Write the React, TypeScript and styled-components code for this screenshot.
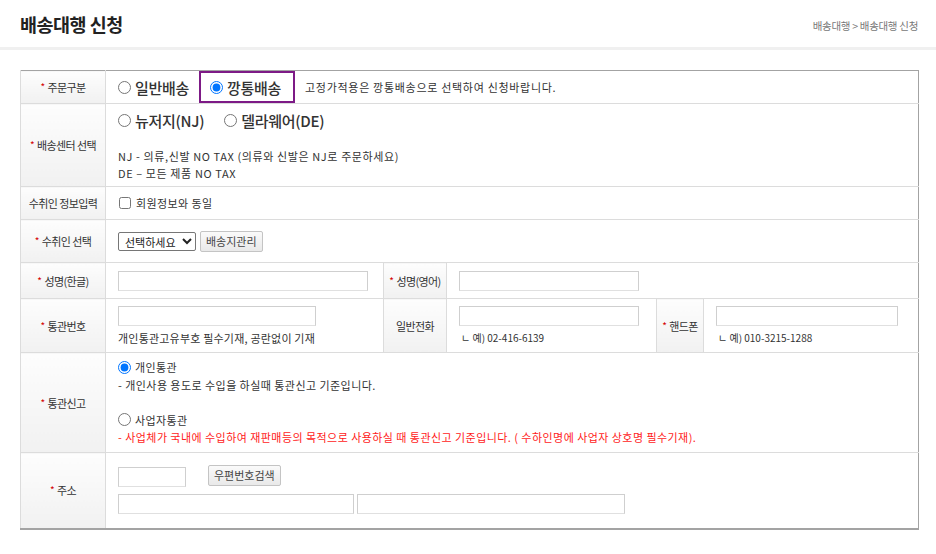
import styled, { createGlobalStyle } from "styled-components";

const GlobalStyle = createGlobalStyle`
  html, body {
    margin: 0;
    padding: 0;
    background: #fff;
    font-family: "Noto Sans CJK KR", "Noto Sans", sans-serif;
    color: #333;
  }
`;

const Page = styled.div({
  width: 936,
  height: 554,
  overflow: "hidden",
  background: "#fff",
});

const Header = styled.div({
  height: 50,
  display: "flex",
  alignItems: "center",
  justifyContent: "space-between",
  padding: "0 18px 0 20px",
  borderBottom: "3px solid #f0f0f0",
  boxSizing: "border-box",
  marginBottom: 20,
});

const Title = styled.h1({
  margin: 0,
  fontSize: 18.5,
  fontWeight: 700,
  color: "#222",
  letterSpacing: -0.5,
});

const Breadcrumb = styled.div({
  fontSize: 10.5,
  color: "#777",
  letterSpacing: -0.3,
  marginTop: 4,
});

const FormTable = styled.table({
  marginLeft: 20,
  width: 898,
  borderCollapse: "collapse",
  tableLayout: "fixed",
  border: "1px solid #a3a3a3",
  borderBottomWidth: 2,
  fontSize: 11,
});

const Row = styled.tr<{ $h: number }>`
  height: ${(p) => p.$h}px;
`;

const Label = styled.th({
  background: "linear-gradient(#fdfdfd, #f1f1f1)",
  borderRight: "1px solid #dcdcdc",
  borderBottom: "1px solid #dcdcdc",
  borderLeft: "1px solid #dcdcdc",
  fontWeight: 400,
  fontSize: 11,
  letterSpacing: -0.6,
  color: "#333",
  textAlign: "center",
  padding: 0,
  whiteSpace: "nowrap",
});

const Star = styled.span({
  color: "#d40000",
  fontSize: 10,
  marginRight: 3,
  verticalAlign: 1,
});

const Cell = styled.td<{ $top?: boolean }>`
  border-bottom: 1px solid #dcdcdc;
  padding: ${(p) => (p.$top ? "6px 0 0 12px" : "0 0 0 12px")};
  vertical-align: ${(p) => (p.$top ? "top" : "middle")};
  color: #333;
`;

const Inline = styled.div({
  display: "flex",
  alignItems: "center",
  gap: 4,
});

const BigOption = styled.label({
  display: "inline-flex",
  alignItems: "center",
  fontSize: 15,
  fontWeight: 500,
  color: "#333",
  letterSpacing: -0.3,
  marginRight: 6,
});

const Highlight = styled.span({
  display: "inline-flex",
  alignItems: "center",
  height: 32,
  boxSizing: "border-box",
  border: "2px solid #7d1a86",
  padding: "0 12px 0 9px",
  margin: "-1px 6px -1px 0",
});

const Radio = styled.input.attrs({ type: "radio" })({
  width: 13,
  height: 13,
  margin: "0 4px 0 0",
});

const Hint = styled.span<{ $wide?: boolean }>`
  font-size: 11px;
  letter-spacing: ${(p) => (p.$wide ? 0.7 : 0.2)}px;
  color: #333;
`;

const Note = styled.div<{ $red?: boolean }>`
  font-size: 11px;
  line-height: 17px;
  letter-spacing: 0.45px;
  color: ${(p) => (p.$red ? "#ff1a1a" : "#333")};
`;

const NoteBlock = styled.div({
  marginTop: 17,
  fontSize: 11,
  lineHeight: "17px",
  letterSpacing: 0.6,
});

const SmallOption = styled.label({
  display: "inline-flex",
  alignItems: "center",
  fontSize: 11,
  color: "#333",
  letterSpacing: 0.4,
});

const Check = styled.input.attrs({ type: "checkbox" })({
  width: 12,
  height: 12,
  margin: "0 5px 0 1px",
});

const Select = styled.select({
  height: 19,
  width: 78,
  fontSize: 11,
  fontFamily: "inherit",
  border: "1px solid #767676",
  borderRadius: 2,
  padding: "0 0 0 2px",
  color: "#222",
  background: "#fff",
});

const Button = styled.button({
  height: 21,
  padding: "0 5px",
  fontSize: 11,
  fontFamily: "inherit",
  color: "#444",
  border: "1px solid #c4c4c4",
  borderRadius: 2,
  background: "linear-gradient(#fafafa, #e9e9e9)",
});

const TextInput = styled.input.attrs({ type: "text" })<{ $w: number }>`
  width: ${(p) => p.$w}px;
  height: 20px;
  box-sizing: border-box;
  border: 1px solid #cfcfcf;
  border-bottom-color: #e0e0e0;
  padding: 0 4px;
  display: block;
`;

const FieldStack = styled.div({
  display: "flex",
  flexDirection: "column",
  gap: 4,
});

const Example = styled.span({
  fontSize: 10,
  color: "#333",
  paddingLeft: 2,
});

const CustomsOption = styled.div<{ $gap?: number }>`
  margin-top: ${(p) => p.$gap ?? 0}px;
`;

const AddressStack = styled.div({
  display: "flex",
  flexDirection: "column",
  gap: 7,
});

export default function App() {
  return (
    <Page>
      <GlobalStyle />
      <Header>
        <Title>배송대행 신청</Title>
        <Breadcrumb>배송대행 &gt; 배송대행 신청</Breadcrumb>
      </Header>

      <FormTable>
        <colgroup>
          <col style={{ width: 85 }} />
          <col style={{ width: 278 }} />
          <col style={{ width: 63 }} />
          <col style={{ width: 210 }} />
          <col style={{ width: 47 }} />
          <col style={{ width: 215 }} />
        </colgroup>
        <tbody>
          <Row $h={33}>
            <Label>
              <Star>*</Star>주문구분
            </Label>
            <Cell colSpan={5}>
              <Inline>
                <BigOption>
                  <Radio name="order" />
                  일반배송
                </BigOption>
                <Highlight>
                  <BigOption style={{ marginRight: 0 }}>
                    <Radio name="order" defaultChecked />
                    깡통배송
                  </BigOption>
                </Highlight>
                <Hint $wide>고정가적용은 깡통배송으로 선택하여 신청바랍니다.</Hint>
              </Inline>
            </Cell>
          </Row>

          <Row $h={83}>
            <Label>
              <Star>*</Star>배송센터 선택
            </Label>
            <Cell colSpan={5} $top>
              <Inline>
                <BigOption style={{ marginRight: 16 }}>
                  <Radio name="center" />
                  뉴저지(NJ)
                </BigOption>
                <BigOption>
                  <Radio name="center" />
                  델라웨어(DE)
                </BigOption>
              </Inline>
              <NoteBlock>
                <div>NJ - 의류,신발 NO TAX (의류와 신발은 NJ로 주문하세요)</div>
                <div>DE – 모든 제품 NO TAX</div>
              </NoteBlock>
            </Cell>
          </Row>

          <Row $h={33}>
            <Label>수취인 정보입력</Label>
            <Cell colSpan={5}>
              <SmallOption>
                <Check />
                회원정보와 동일
              </SmallOption>
            </Cell>
          </Row>

          <Row $h={43}>
            <Label>
              <Star>*</Star>수취인 선택
            </Label>
            <Cell colSpan={5}>
              <Inline>
                <Select defaultValue="">
                  <option value="">선택하세요</option>
                </Select>
                <Button>배송지관리</Button>
              </Inline>
            </Cell>
          </Row>

          <Row $h={36}>
            <Label>
              <Star>*</Star>성명(한글)
            </Label>
            <Cell>
              <TextInput $w={250} />
            </Cell>
            <Label>
              <Star>*</Star>성명(영어)
            </Label>
            <Cell colSpan={3}>
              <TextInput $w={180} />
            </Cell>
          </Row>

          <Row $h={54}>
            <Label>
              <Star>*</Star>통관번호
            </Label>
            <Cell>
              <FieldStack>
                <TextInput $w={198} />
                <Hint>개인통관고유부호 필수기재, 공란없이 기재</Hint>
              </FieldStack>
            </Cell>
            <Label>일반전화</Label>
            <Cell>
              <FieldStack>
                <TextInput $w={180} />
                <Example>ㄴ 예) 02-416-6139</Example>
              </FieldStack>
            </Cell>
            <Label>
              <Star>*</Star>핸드폰
            </Label>
            <Cell>
              <FieldStack>
                <TextInput $w={182} />
                <Example>ㄴ 예) 010-3215-1288</Example>
              </FieldStack>
            </Cell>
          </Row>

          <Row $h={100}>
            <Label>
              <Star>*</Star>통관신고
            </Label>
            <Cell colSpan={5} $top>
              <CustomsOption>
                <SmallOption>
                  <Radio name="customs" defaultChecked />
                  개인통관
                </SmallOption>
                <Note>- 개인사용 용도로 수입을 하실때 통관신고 기준입니다.</Note>
              </CustomsOption>
              <CustomsOption $gap={18}>
                <SmallOption>
                  <Radio name="customs" />
                  사업자통관
                </SmallOption>
                <Note $red>
                  - 사업체가 국내에 수입하여 재판매등의 목적으로 사용하실 때 통관신고 기준입니다. ( 수하인명에 사업자 상호명 필수기재).
                </Note>
              </CustomsOption>
            </Cell>
          </Row>

          <Row $h={76}>
            <Label>
              <Star>*</Star>주소
            </Label>
            <Cell colSpan={5}>
              <AddressStack>
                <Inline>
                  <TextInput $w={68} />
                  <Button style={{ marginLeft: 18, marginTop: -3 }}>우편번호검색</Button>
                </Inline>
                <Inline style={{ gap: 3 }}>
                  <TextInput $w={236} />
                  <TextInput $w={268} />
                </Inline>
              </AddressStack>
            </Cell>
          </Row>
        </tbody>
      </FormTable>
    </Page>
  );
}
